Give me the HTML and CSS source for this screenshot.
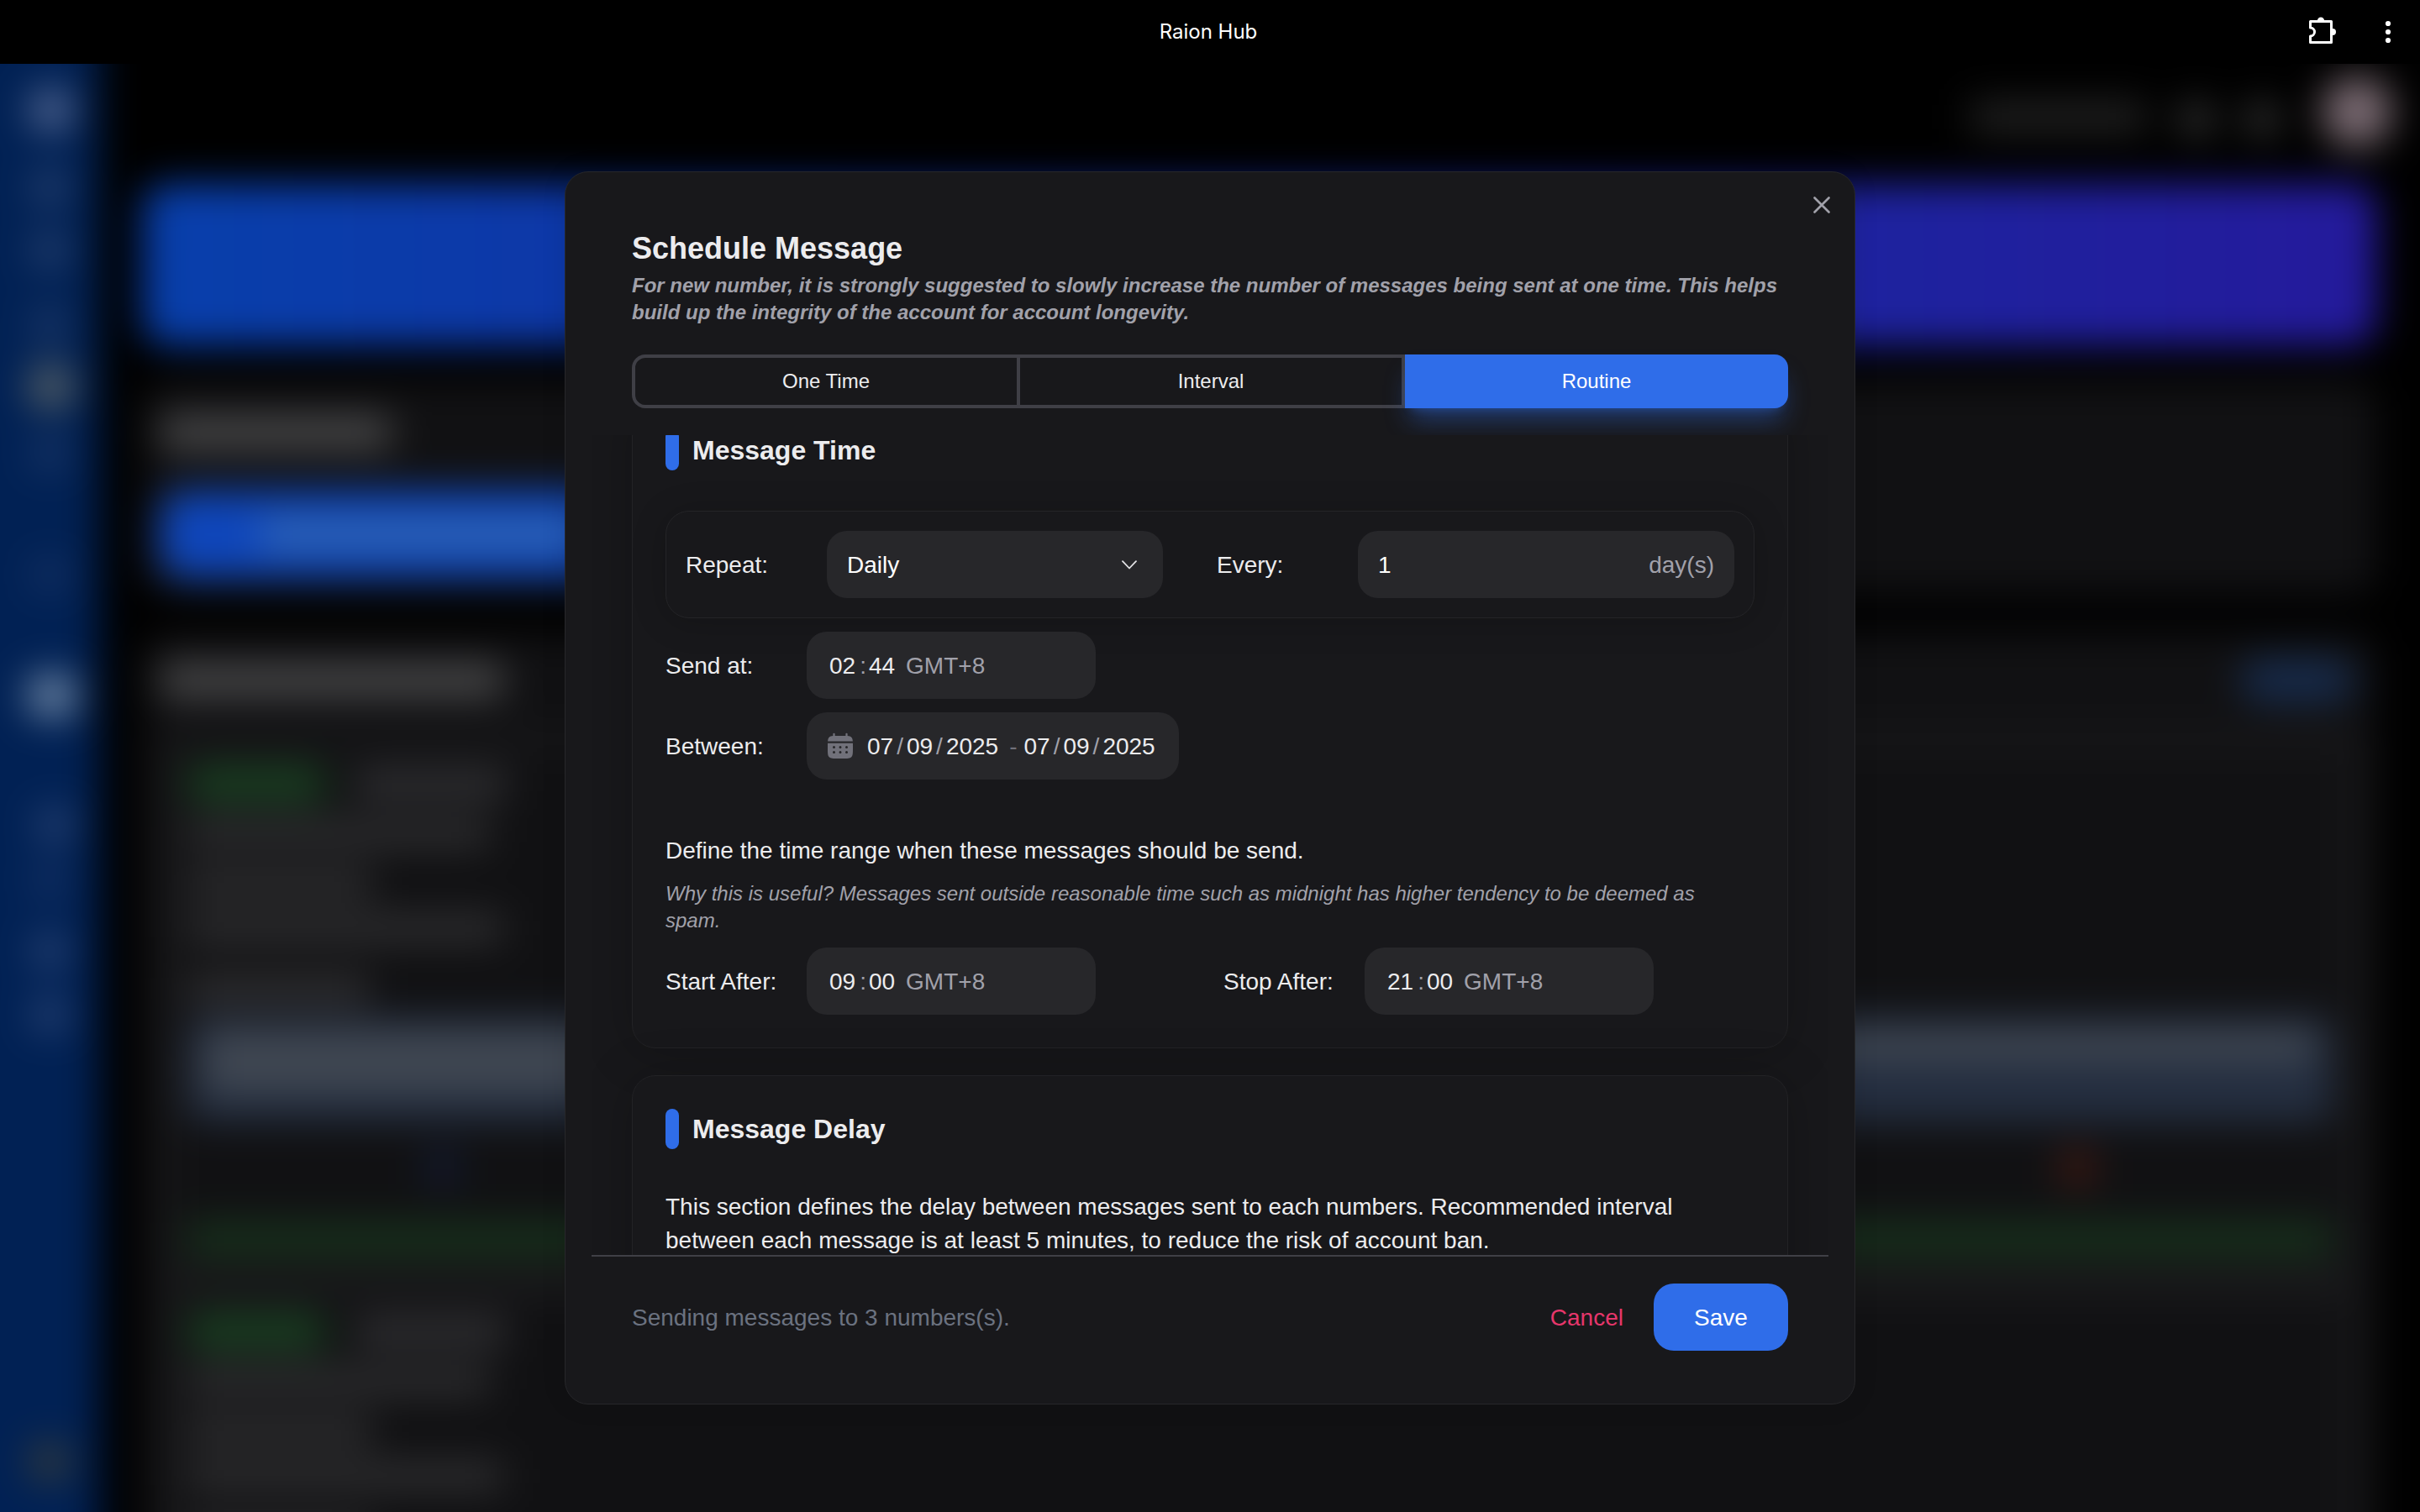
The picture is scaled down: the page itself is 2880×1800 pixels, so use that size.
FILE: index.html
```html
<!DOCTYPE html>
<html lang="en">
<head>
<meta charset="utf-8">
<title>Raion Hub</title>
<link rel="stylesheet" href="styles.css">
</head>
<body>
<header class="titlebar">
  <span></span>
  <span class="titlebar-name">Raion Hub</span>
  <span class="titlebar-actions">
    <svg class="icon-ext" viewBox="0 0 34 34" fill="none" stroke="#fff" stroke-width="3" stroke-linejoin="round"><path d="M3.500 4.500H28.500V29.500H3.500V22A5 5 0 0 0 3.500 12Z"/><path d="M11.800 4A4.200 4.600 0 0 1 20.200 4ZM30 13A4 4 0 0 1 30 21Z" fill="#fff" stroke="none"/></svg>
    <svg class="icon-more" viewBox="0 0 8 28" fill="#fff"><circle cx="4" cy="4" r="3.100"/><circle cx="4" cy="14" r="3.100"/><circle cx="4" cy="24" r="3.100"/></svg>
  </span>
</header>

<div class="stage">
  <div class="backdrop" aria-hidden="true">
    <nav class="rail">
      <i class="dot d1"></i><i class="dot d2"></i><i class="dot d3"></i><i class="dot d4"></i><i class="dot d5"></i><i class="dot d6"></i><i class="dot d7"></i><i class="dot d8"></i><i class="dot d9"></i><i class="dot d10"></i><i class="dot d11"></i><i class="dot d12"></i><i class="dot d13"></i>
    </nav>
    <div class="page">
      <div class="userbar"><i class="user-name"></i><i class="user-btn"></i><i class="user-btn"></i><i class="avatar"></i></div>
      <div class="banner"></div>
      <div class="panel quick"><i class="heading"></i><div class="action"><i></i></div></div>
      <div class="panel list">
        <div class="list-head"><i class="heading wide"></i><i class="pill"></i></div>
        <div class="item">
          <div class="row"><i class="chip"></i><i class="line l1"></i></div>
          <i class="line l2"></i><i class="line l3"></i><i class="line l4"></i><i class="line l5"></i>
          <div class="preview"><i class="copy"></i><i class="copy copy-half"></i></div>
          <div class="marks"><i class="mark"></i><i class="mark red"></i></div>
          <div class="progress"></div>
        </div>
        <div class="item">
          <div class="row"><i class="chip"></i><i class="line l1"></i></div>
          <i class="line l2"></i><i class="line l3"></i><i class="line l4"></i><i class="line l5"></i>
        </div>
      </div>
    </div>
  </div>

  <section class="modal" role="dialog" aria-label="Schedule Message">
    <button class="close" aria-label="Close"><svg viewBox="0 0 20 20" fill="none" stroke="currentColor" stroke-width="2.600" stroke-linecap="round"><path d="M1.500 1.500 18.500 18.500M18.500 1.500 1.500 18.500"/></svg></button>
    <div class="modal-head">
      <h1>Schedule Message</h1>
      <p>For new number, it is strongly suggested to slowly increase the number of messages being sent at one time. This helps build up the integrity of the account for account longevity.</p>
      <div class="tabs">
        <button class="tab">One Time</button><button class="tab">Interval</button><button class="tab active">Routine</button>
      </div>
    </div>

    <div class="scroller">
      <div class="cards">
        <div class="card">
          <h2>Message Time</h2>
          <div class="repeat">
            <span class="repeat-label">Repeat:</span>
            <div class="field select"><span>Daily</span><svg class="chevron" viewBox="0 0 18 11" fill="none" stroke="#e4e4e7" stroke-width="1.800" stroke-linecap="round" stroke-linejoin="round"><path d="M1 1.200 9 9.500 17 1.200"/></svg></div>
            <span class="every-label">Every:</span>
            <div class="field number"><span>1</span><span class="unit">day(s)</span></div>
          </div>
          <div class="form-row"><span class="label">Send at:</span><div class="field time"><b>02</b><s>:</s><b>44</b><em>GMT+8</em></div></div>
          <div class="form-row"><span class="label">Between:</span>
            <div class="field dates">
              <svg class="calendar" viewBox="0 0 24 24" fill="currentColor" fill-rule="evenodd"><path d="M7.750 2.500a.75.75 0 0 0-1.500 0v1.580c-1.440.115-2.384.397-3.078 1.092-.695.694-.977 1.639-1.093 3.078h19.842c-.116-1.440-.398-2.384-1.093-3.078-.694-.695-1.639-.977-3.078-1.093V2.500a.75.75 0 0 0-1.500 0v1.513C15.585 4 14.839 4 14 4h-4c-.839 0-1.585 0-2.250.013V2.500Z"/><path d="M2 12c0-.839 0-1.585.013-2.250h19.974C22 10.415 22 11.161 22 12v2c0 3.771 0 5.657-1.172 6.828C19.657 22 17.771 22 14 22h-4c-3.771 0-5.657 0-6.828-1.172C2 19.657 2 17.771 2 14v-2Zm15 2a1 1 0 1 0 0-2 1 1 0 0 0 0 2Zm0 4a1 1 0 1 0 0-2 1 1 0 0 0 0 2Zm-4-5a1 1 0 1 1-2 0 1 1 0 0 1 2 0Zm0 4a1 1 0 1 1-2 0 1 1 0 0 1 2 0Zm-6-3a1 1 0 1 0 0-2 1 1 0 0 0 0 2Zm0 4a1 1 0 1 0 0-2 1 1 0 0 0 0 2Z"/></svg>
              <b>07</b><s>/</s><b>09</b><s>/</s><b>2025</b><u>-</u><b>07</b><s>/</s><b>09</b><s>/</s><b>2025</b>
            </div>
          </div>
          <p class="body define">Define the time range when these messages should be send.</p>
          <p class="hint">Why this is useful? Messages sent outside reasonable time such as midnight has higher tendency to be deemed as spam.</p>
          <div class="range">
            <div class="form-row"><span class="label">Start After:</span><div class="field time"><b>09</b><s>:</s><b>00</b><em>GMT+8</em></div></div>
            <div class="form-row"><span class="label">Stop After:</span><div class="field time"><b>21</b><s>:</s><b>00</b><em>GMT+8</em></div></div>
          </div>
        </div>
        <div class="card">
          <h2>Message Delay</h2>
          <p class="body">This section defines the delay between messages sent to each numbers. Recommended interval between each message is at least 5 minutes, to reduce the risk of account ban.</p>
        </div>
      </div>
    </div>

    <footer class="modal-foot">
      <span class="summary">Sending messages to 3 numbers(s).</span>
      <button class="cancel">Cancel</button>
      <button class="save">Save</button>
    </footer>
  </section>
</div>
</body>
</html>
```
FILE: styles.css
```css
* { box-sizing: border-box; margin: 0; padding: 0; }
body {
  width: 2880px; height: 1800px; overflow: hidden; background: #000;
  display: flex; flex-direction: column;
  font-family: "Liberation Sans", Arial, sans-serif; font-size: 28px; line-height: 40px; color: #ececee;
}
button { font: inherit; color: inherit; background: none; border: 0; }
i { display: block; }
b, s, u, em { font-weight: 400; font-style: normal; text-decoration: none; }
svg { display: block; }

/* Window title bar */
.titlebar { height: 76px; flex: none; display: grid; grid-template-columns: 1fr auto 1fr; align-items: center; background: #000; }
.titlebar-name { font-family: Inter, sans-serif; font-size: 24px; font-weight: 400; color: #fff; padding-right: 4px; }
.titlebar-actions { display: flex; justify-content: flex-end; align-items: center; gap: 58px; padding-right: 34px; }
.icon-ext { width: 34px; height: 34px; overflow: visible; }
.icon-more { width: 8px; height: 28px; }

/* Blurred application behind the dialog */
.stage { position: relative; flex: 1; overflow: hidden; display: flex; justify-content: center; align-items: flex-start; padding-top: 128px; }
.backdrop { position: absolute; inset: -76px -80px -80px -80px; display: flex; filter: blur(23px); }
.rail { width: 198px; flex: none; background: #012154; display: flex; flex-direction: column; align-items: flex-start; padding: 106px 0 0 118px; }
.dot { width: 42px; height: 42px; border-radius: 50%; flex: none; background: #2a4472; }
.d1 { width: 50px; height: 50px; margin-left: -2px; background: #5b6e98; }
.d2 { margin-top: 46px; }
.d3 { margin-top: 33px; }
.d4 { margin-top: 46px; background: #203b6a; }
.d5 { margin-top: 26px; width: 54px; height: 54px; margin-left: -4px; background: #5b6466; }
.d6 { margin-top: 32px; background: #1c3868; }
.d7 { margin-top: 102px; background: #163264; }
.d8 { margin-top: 96px; width: 60px; height: 54px; margin-left: -6px; background: #7189a6; }
.d9 { margin-top: 106px; margin-left: 6px; background: #2c4676; }
.d10 { margin-top: 25px; background: #163264; }
.d11 { margin-top: 41px; background: #2c4676; }
.d12 { margin-top: 34px; background: #2c4676; }
.d13 { margin-top: 486px; width: 50px; height: 50px; margin-left: -4px; background: #333a3a; }
.page { flex: 1; display: flex; flex-direction: column; padding: 0 132px 0 0; }
.page > * { margin-left: 52px; }
.userbar { height: 219px; flex: none; display: flex; justify-content: flex-end; align-items: flex-start; padding-top: 121px; margin-right: -50px; }
.user-name { width: 210px; height: 36px; background: #232323; margin-right: 38px; }
.user-btn { width: 42px; height: 42px; background: #383838; border-radius: 50%; margin-right: 36px; }
.avatar { width: 84px; height: 84px; margin: -30px 31px 0 14px; border-radius: 50%; background: #7c6c74; }
.banner { height: 192px; flex: none; border-radius: 28px; background: linear-gradient(90deg, #083fab, #241a9b); }
.panel { background: #111113; border-radius: 28px; }
.quick { margin-top: 43px; height: 254px; flex: none; padding: 42px 20px 0; }
.heading { width: 276px; height: 38px; background: #4b4b4c; border-radius: 10px; }
.heading.wide { width: 410px; }
.action { width: 640px; height: 104px; margin-top: 50px; border-radius: 28px; background: #0f46ba; display: flex; align-items: center; padding-left: 120px; }
.action i { width: 380px; height: 26px; background: #3c6fae; }
.list { margin-top: 46px; flex: 1; padding: 30px 20px 0; }
.list-head { display: flex; justify-content: space-between; align-items: center; margin-bottom: 39px; }
.pill { width: 136px; height: 52px; border-radius: 26px; background: #172b4c; margin-right: 6px; }
.item { background: #111113; border: 10px solid #202022; border-radius: 28px; padding: 26px 22px 0; height: 652px; overflow: hidden; }
.row { display: flex; align-items: center; gap: 34px; }
.chip { width: 166px; height: 44px; border-radius: 16px; background: #1a4022; }
.line { height: 32px; background: #303032; }
.l1 { width: 180px; background: #333336; }
.l2 { width: 360px; margin-top: 21px; }
.l3 { width: 220px; margin-top: 27px; }
.l4 { width: 376px; margin-top: 22px; }
.l5 { width: 218px; height: 34px; margin-top: 40px; }
.preview { margin-top: 15px; height: 126px; border-radius: 20px; background: #242e40; padding: 22px; }
.copy { height: 26px; background: #4b5159; }
.copy-half { width: 1100px; margin-top: 12px; }
.marks { display: flex; justify-content: space-between; padding: 36px 286px 0; }
.mark { width: 36px; height: 36px; background: #121c38; }
.mark.red { background: #4b1b12; }
.progress { height: 42px; margin-top: 46px; background: #17301c; }

/* Dialog */
.modal { position: relative; width: 1536px; height: 1468px; border: 1px solid #27272a; border-radius: 28px; background: #18181b; display: flex; flex-direction: column; padding: 63px 31px 0; box-shadow: 0 0 30px rgba(0,0,0,.1); }
.close { position: absolute; right: 29px; top: 29px; color: #a1a1aa; }
.close svg { width: 20px; height: 20px; }
.modal-head { padding: 0 48px; height: 250px; flex: none; }
h1 { font-size: 36px; line-height: 56px; }
.modal-head p { font-size: 24px; line-height: 32px; font-weight: 700; font-style: italic; color: #a1a1aa; }
.tabs { display: flex; height: 64px; margin-top: 34px; }
.tab { width: 458px; border: solid #3f3f46; border-width: 4px 4px 4px 0; font-size: 24px; }
.tab:first-child { width: 462px; border-left-width: 4px; border-radius: 16px 0 0 16px; }
.tab.active { width: 456px; border: 0; border-radius: 0 16px 16px 0; background: #2f6de9; color: #fff; box-shadow: 0 20px 30px -6px rgba(47,109,233,.4), 0 8px 12px -8px rgba(47,109,233,.4); }
.scroller { position: relative; height: 976px; flex: none; overflow: hidden; background: #18181b; padding: 0 48px; }
.cards { display: flex; flex-direction: column; gap: 32px; margin-top: -46px; }
.card { border: 1px solid #222225; border-radius: 28px; background: #18181b; padding: 39px; box-shadow: 0 4px 60px rgba(0,0,0,.22); }
.card + .card { height: 400px; }
h2 { display: flex; align-items: center; gap: 16px; height: 48px; font-size: 32px; margin-bottom: 48px; }
h2::before { content: ""; width: 16px; height: 48px; border-radius: 8px; background: #2f6de9; }
.repeat { display: flex; align-items: center; height: 128px; padding: 0 23px; border: 1px solid #242427; border-radius: 28px; box-shadow: 0 4px 40px rgba(0,0,0,.2); margin-bottom: 16px; }
.repeat-label { width: 168px; }
.every-label { width: 168px; margin-left: 64px; }
.repeat span, .form-row .label, .field b, .field s, .field u, .field em { padding-top: 2px; }
.field { height: 80px; border-radius: 24px; background: #27272a; display: flex; align-items: center; padding: 0 24px; }
.select { width: 400px; justify-content: space-between; padding-right: 31px; color: #fff; }
.chevron { width: 18px; height: 11px; }
.number { width: 448px; justify-content: space-between; color: #fff; }
.unit, .field s, .field em { color: #a1a1aa; }
.form-row { display: flex; align-items: center; }
.form-row + .form-row { margin-top: 16px; }
.label { width: 168px; }
.time { width: 344px; padding-left: 27px; }
.time s { margin: 0 3px 0 5px; }
.time em { margin-left: 13px; }
.dates { width: 443px; padding-left: 22px; }
.dates s { margin: 0 4px; }
.dates u { color: #71717a; margin: 0 8px 0 13px; }
.calendar { width: 36px; height: 36px; color: #71717a; margin-right: 14px; }
.define { margin-top: 64px; padding-top: 1px; }
.hint { margin: 15px 0 16px; font-size: 24px; line-height: 32px; font-style: italic; color: #a1a1aa; }
.card + .card .body { padding-top: 1px; }
.range { display: grid; grid-template-columns: 664px auto; }
.range .form-row { margin: 0; }
.modal-foot { border-top: 2px solid #3f3f46; padding: 32px 48px 0; display: flex; align-items: center; }
.summary { flex: 1; color: #6b7280; padding-top: 2px; }
.cancel { color: #e6366b; padding: 2px 36px 0; }
.save { width: 160px; height: 80px; border-radius: 24px; background: #2f6de9; color: #fff; padding-top: 2px; }
```
